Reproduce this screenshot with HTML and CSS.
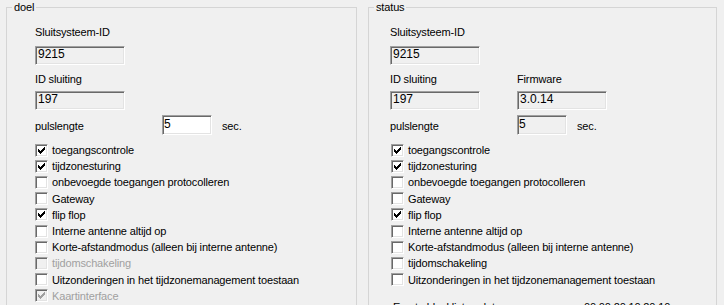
FILE: index.html
```html
<!DOCTYPE html>
<html lang="nl">
<head>
    <meta charset="UTF-8">
    <title>Sluiting</title>
    <link rel="stylesheet" href="styles.css">
</head>
<body>
    <div class="panels">
        <!-- doel -->
        <fieldset class="group group-doel">
            <legend>doel</legend>
            <div class="inner">
                <div class="ids">
                    <span class="lbl">Sluitsysteem-ID</span>
                    <span></span>
                    <span class="field gap-a">9215</span>
                    <span class="gap-a"></span>
                    <span class="lbl gap-b">ID sluiting</span>
                    <span class="gap-b"></span>
                    <span class="field gap-c">197</span>
                    <span class="gap-c"></span>
                    <span class="lbl puls gap-d">pulslengte</span>
                    <span class="puls-val gap-d"><span class="field short edit">5</span><span class="unit">sec.</span></span>
                </div>
                <ul class="checks">
                    <li><span class="box on"><svg viewBox="0 0 13 13"><path d="M3 5h1v3H3zM4 6h1v3H4zM5 7h1v3H5zM6 6h1v3H6zM7 5h1v3H7zM8 4h1v3H8zM9 3h1v3H9z"/></svg></span>toegangscontrole</li>
                    <li><span class="box on"><svg viewBox="0 0 13 13"><path d="M3 5h1v3H3zM4 6h1v3H4zM5 7h1v3H5zM6 6h1v3H6zM7 5h1v3H7zM8 4h1v3H8zM9 3h1v3H9z"/></svg></span>tijdzonesturing</li>
                    <li><span class="box"></span>onbevoegde toegangen protocolleren</li>
                    <li><span class="box"></span>Gateway</li>
                    <li><span class="box on"><svg viewBox="0 0 13 13"><path d="M3 5h1v3H3zM4 6h1v3H4zM5 7h1v3H5zM6 6h1v3H6zM7 5h1v3H7zM8 4h1v3H8zM9 3h1v3H9z"/></svg></span>flip flop</li>
                    <li><span class="box"></span>Interne antenne altijd op</li>
                    <li><span class="box"></span>Korte-afstandmodus (alleen bij interne antenne)</li>
                    <li class="off"><span class="box"></span>tijdomschakeling</li>
                    <li><span class="box"></span>Uitzonderingen in het tijdzonemanagement toestaan</li>
                    <li class="off"><span class="box on"><svg viewBox="0 0 13 13"><path d="M3 5h1v3H3zM4 6h1v3H4zM5 7h1v3H5zM6 6h1v3H6zM7 5h1v3H7zM8 4h1v3H8zM9 3h1v3H9z"/></svg></span>Kaartinterface</li>
                </ul>
            </div>
        </fieldset>

        <!-- status -->
        <fieldset class="group group-status">
            <legend>status</legend>
            <div class="inner">
                <div class="ids">
                    <span class="lbl">Sluitsysteem-ID</span>
                    <span></span>
                    <span class="field gap-a">9215</span>
                    <span class="gap-a"></span>
                    <span class="lbl gap-b">ID sluiting</span>
                    <span class="lbl gap-b">Firmware</span>
                    <span class="field gap-c">197</span>
                    <span class="field gap-c">3.0.14</span>
                    <span class="lbl puls gap-d">pulslengte</span>
                    <span class="puls-val gap-d"><span class="field short">5</span><span class="unit">sec.</span></span>
                </div>
                <ul class="checks">
                    <li><span class="box on"><svg viewBox="0 0 13 13"><path d="M3 5h1v3H3zM4 6h1v3H4zM5 7h1v3H5zM6 6h1v3H6zM7 5h1v3H7zM8 4h1v3H8zM9 3h1v3H9z"/></svg></span>toegangscontrole</li>
                    <li><span class="box on"><svg viewBox="0 0 13 13"><path d="M3 5h1v3H3zM4 6h1v3H4zM5 7h1v3H5zM6 6h1v3H6zM7 5h1v3H7zM8 4h1v3H8zM9 3h1v3H9z"/></svg></span>tijdzonesturing</li>
                    <li><span class="box"></span>onbevoegde toegangen protocolleren</li>
                    <li><span class="box"></span>Gateway</li>
                    <li><span class="box on"><svg viewBox="0 0 13 13"><path d="M3 5h1v3H3zM4 6h1v3H4zM5 7h1v3H5zM6 6h1v3H6zM7 5h1v3H7zM8 4h1v3H8zM9 3h1v3H9z"/></svg></span>flip flop</li>
                    <li><span class="box"></span>Interne antenne altijd op</li>
                    <li><span class="box"></span>Korte-afstandmodus (alleen bij interne antenne)</li>
                    <li><span class="box"></span>tijdomschakeling</li>
                    <li><span class="box"></span>Uitzonderingen in het tijdzonemanagement toestaan</li>
                </ul>
                <div class="stamp">
                    <span class="lbl stamp-lbl">Eerste blacklist-update</span>
                    <span class="lbl">00.00.20 10:20:10</span>
                </div>
            </div>
        </fieldset>
    </div>
</body>
</html>
```

FILE: styles.css
```css
/* Basis */
body {
    margin: 0;
    padding: 1px 0 0 6px;
    background-color: #f0f0f0;
    font-family: "Liberation Sans", Arial, sans-serif;
    font-size: 11px;
    line-height: 13px;
    letter-spacing: -0.15px;
    color: #000;
    overflow: hidden;
}
.panels {
    display: flex;
    gap: 11px;
}

/* Groepskaders */
.group {
    margin: 0;
    padding: 0;
    min-width: 0;
    height: 340px;
    border: 1px solid #d5d5d5;
}
.group-doel {
    width: 351px;
    box-sizing: border-box;
}
.group-status {
    width: 349px;
    box-sizing: border-box;
}
legend {
    margin-left: 5px;
    padding: 0 2px;
    line-height: 13px;
}
.inner {
    padding-top: 12px;
}
.group-doel .inner {
    padding-left: 28px;
}
.group-status .inner {
    padding-left: 21px;
}

/* ID-velden */
.ids {
    display: grid;
    grid-template-columns: 127px auto;
    justify-items: start;
}
.gap-a { margin-top: 7px; }
.gap-b { margin-top: 8px; }
.gap-c { margin-top: 5px; }
.gap-d { margin-top: 5px; }

.field {
    display: block;
    box-sizing: border-box;
    width: 90px;
    height: 19px;
    padding: 0 0 0 2px;
    font-size: 12px;
    line-height: 15px;
    letter-spacing: 0;
    background-color: #f0f0f0;
    border: 1px solid;
    border-color: #a0a0a0 #fff #fff #a0a0a0;
    box-shadow: inset 1px 1px 0 #696969, inset -1px -1px 0 #e3e3e3;
}
.field.short {
    width: 50px;
    height: 20px;
    line-height: 16px;
    padding-left: 1px;
}
.field.edit {
    background-color: #fff;
}
.puls {
    align-self: center;
    padding-top: 3px;
}
.puls-val {
    display: flex;
    align-items: center;
}
.unit {
    margin-left: 10px;
    padding-top: 2px;
}

/* Selectievakjes */
.checks {
    list-style: none;
    margin: 7px 0 0;
    padding: 0;
}
.checks li {
    display: flex;
    align-items: center;
    height: 16.2px;
    line-height: 16px;
}
.group-status .checks {
    margin-left: 1px;
}
.box {
    box-sizing: border-box;
    width: 13px;
    height: 13px;
    margin-right: 4px;
    flex: none;
    background-color: #fff;
    border: 1px solid;
    border-color: #a0a0a0 #fff #fff #a0a0a0;
    box-shadow: inset 1px 1px 0 #696969, inset -1px -1px 0 #e3e3e3;
    position: relative;
}
.box svg {
    position: absolute;
    left: -1px;
    top: -1px;
    width: 13px;
    height: 13px;
    shape-rendering: crispEdges;
    fill: #000;
}
.checks li.off {
    color: #a0a0a0;
}
.checks li.off .box {
    background-color: #f0f0f0;
}
.checks li.off .box svg {
    fill: #a0a0a0;
}

/* Onderste regel */
.stamp {
    display: flex;
    margin-top: 13px;
    padding-left: 3px;
}
.stamp-lbl {
    width: 191px;
}
```
